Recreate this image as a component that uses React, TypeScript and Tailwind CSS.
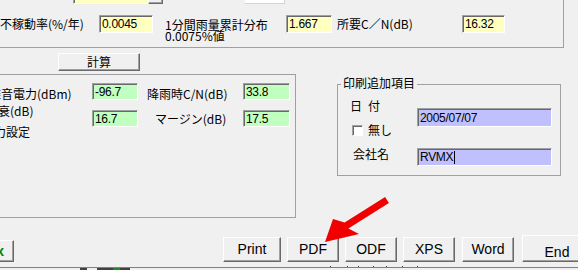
const sunken =
  'border border-t-[#a0a0a0] border-l-[#a0a0a0] border-b-white border-r-white shadow-[inset_1px_1px_0_#696969]'
const raised =
  'border border-t-white border-l-white border-b-[#696969] border-r-[#696969] shadow-[inset_-1px_-1px_0_#a0a0a0] bg-[#f0f0f0]'
const num = "font-['Liberation_Sans',Arial,sans-serif] text-[12px] tracking-[-0.3px]"
const btnText = "font-['Liberation_Sans',Arial,sans-serif] text-[14px]"

function Field({ className, children }: { className: string; children?: React.ReactNode }) {
  return (
    <div className={`${sunken} ${className} flex shrink-0 items-center pl-[2px] leading-none ${num}`}>
      {children}
    </div>
  )
}

function Btn({ className, children }: { className: string; children: React.ReactNode }) {
  return (
    <div className={`${raised} ${className} flex shrink-0 items-center justify-center ${btnText}`}>
      {children}
    </div>
  )
}

export default function App() {
  return (
    <div className="relative h-[270px] w-[578px] overflow-hidden bg-[#f0f0f0] font-['Noto_Sans_CJK_JP',sans-serif] text-[12px] text-black">
      {/* upper group (top edge is outside the shot) */}
      <div className="h-[48px] w-[564px] border-r border-b border-[#a0a0a0]">
        <div className="flex h-[4px] items-end">
          <div className={`${sunken} ml-[73px] h-[20px] w-[75px] shrink-0 bg-[#ffffc0]`} />
          <div className={`${raised} h-[20px] w-[15px] shrink-0`} />
          <div className="ml-[82px] h-[20px] w-[40px] shrink-0 border-r border-b border-[#d4d4d4] bg-white" />
        </div>
        <div className="mt-[11px] flex h-[18px] items-center">
          <span className="w-[99px] shrink-0 whitespace-nowrap leading-[14px]">不稼動率(%/年)</span>
          <Field className="h-[18px] w-[54px] bg-[#ffffc0]">0.0045</Field>
          <div className="ml-[12px] mt-[4px] w-[121px] shrink-0 self-start whitespace-nowrap leading-[11px]">
            1分間雨量累計分布
            <br />
            0.0075%値
          </div>
          <Field className="h-[18px] w-[46px] bg-[#ffffc0]">1.667</Field>
          <span className="ml-[5px] w-[125px] shrink-0 whitespace-nowrap leading-[14px]">所要C／N(dB)</span>
          <Field className="h-[18px] w-[43px] bg-[#ffffc0]">16.32</Field>
        </div>
      </div>

      <Btn className="ml-[58px] mt-[5px] h-[18px] w-[82px]">
        <span className="font-['Noto_Sans_CJK_JP',sans-serif] text-[12px] leading-none">計算</span>
      </Btn>

      <div className="mt-[3px] flex items-start">
        {/* result group */}
        <div className="flex h-[144px] w-[296px] shrink-0 border-t border-r border-b border-[#a0a0a0]">
          <div className="flex w-[92px] shrink-0 flex-col leading-[14px] whitespace-nowrap">
            <span className="ml-[-11px] mt-[12px]">雑音電力(dBm)</span>
            <span className="ml-[-14px] mt-[3px]">減衰(dB)</span>
            <span className="ml-[-18px] mt-[7px]">入力設定</span>
          </div>
          <div className="flex w-[46px] shrink-0 flex-col">
            <Field className="mt-[8px] h-[17px] w-[46px] bg-[#c0ffc0]">-96.7</Field>
            <Field className="mt-[10px] h-[17px] w-[46px] bg-[#c0ffc0]">16.7</Field>
          </div>
          <div className="flex w-[105px] shrink-0 flex-col leading-[14px] whitespace-nowrap">
            <span className="ml-[9px] mt-[12px]">降雨時C/N(dB)</span>
            <span className="ml-[17px] mt-[11px]">マージン(dB)</span>
          </div>
          <div className="flex w-[47px] shrink-0 flex-col">
            <Field className="mt-[8px] h-[17px] w-[47px] bg-[#c0ffc0]">33.8</Field>
            <Field className="mt-[10px] h-[17px] w-[47px] bg-[#c0ffc0]">17.5</Field>
          </div>
        </div>

        {/* print extras group */}
        <div className="relative ml-[41px] mt-[10px] flex h-[92px] w-[224px] shrink-0 border border-[#a0a0a0]">
          <span className="absolute left-[3px] top-[-9px] bg-[#f0f0f0] px-[2px] leading-[14px] whitespace-nowrap">
            印刷追加項目
          </span>
          <div className="flex w-[79px] shrink-0 flex-col leading-[14px] whitespace-nowrap">
            <div className="ml-[12px] mt-[14px] flex">
              <span>日</span>
              <span className="ml-[6px]">付</span>
            </div>
            <div className="mt-[10px] flex h-[14px] items-center">
              <div className={`${sunken} ml-[14px] h-[11px] w-[11px] bg-white`} />
              <span className="ml-[5px]">無し</span>
            </div>
            <span className="ml-[15px] mt-[10px]">会社名</span>
          </div>
          <div className="flex flex-col">
            <Field className="mt-[23px] h-[19px] w-[135px] bg-[#c0c0ff]">2005/07/07</Field>
            <Field className="mt-[21px] h-[18px] w-[135px] bg-[#c0c0ff]">
              RVMX
              <span className="ml-[1px] h-[13px] w-[1px] bg-black" />
            </Field>
          </div>
        </div>
      </div>

      {/* bottom buttons */}
      <div className="mt-[17px] flex h-[27px] items-end">
        <Btn className="ml-[-20px] h-[22px] w-[34px] !justify-end pr-[9px]">
          <span className="font-bold text-[#008000]">x</span>
        </Btn>
        <Btn className="ml-[209px] h-[25px] w-[58px]">Print</Btn>
        <Btn className="ml-[6px] h-[25px] w-[52px]">PDF</Btn>
        <Btn className="ml-[6px] h-[25px] w-[52px]">ODF</Btn>
        <Btn className="ml-[6px] h-[25px] w-[52px]">XPS</Btn>
        <Btn className="ml-[7px] h-[25px] w-[52px] text-[13px]">Word</Btn>
        <Btn className="ml-[8px] h-[27px] w-[70px] !items-start pt-[6px] text-[12px]">End</Btn>
      </div>

      {/* strip of the window below */}
      <div className="mt-[4px] flex h-[1px] items-end">
        <span className="ml-[330px] h-[1px] w-[1px] bg-[#404040]" />
        <span className="ml-[16px] h-[1px] w-[1px] bg-[#404040]" />
        <span className="ml-[10px] h-[1px] w-[1px] bg-[#404040]" />
        <span className="ml-[14px] h-[1px] w-[1px] bg-[#404040]" />
        <span className="ml-[12px] h-[1px] w-[1px] bg-[#404040]" />
        <span className="ml-[15px] h-[1px] w-[1px] bg-[#404040]" />
        <span className="ml-[14px] h-[1px] w-[1px] bg-[#404040]" />
      </div>
      <div className="flex h-[3px] border-t border-[#808080]">
        <span className="ml-[80px] w-[7px] bg-[#404040]" />
        <span className="ml-[10px] w-[16px] bg-[#404040]" />
        <span className="w-[7px] bg-[#1f8a1f]" />
        <span className="w-[10px] bg-[#404040]" />
      </div>

      {/* red pointer arrow */}
      <svg className="pointer-events-none absolute left-0 top-0" width="578" height="270" viewBox="0 0 578 270">
        <polygon
          points="325,242 333,219 344.6,222.5 385.1,197 388.9,203 348.4,228.5 359,234"
          fill="#f00000"
        />
      </svg>
    </div>
  )
}
